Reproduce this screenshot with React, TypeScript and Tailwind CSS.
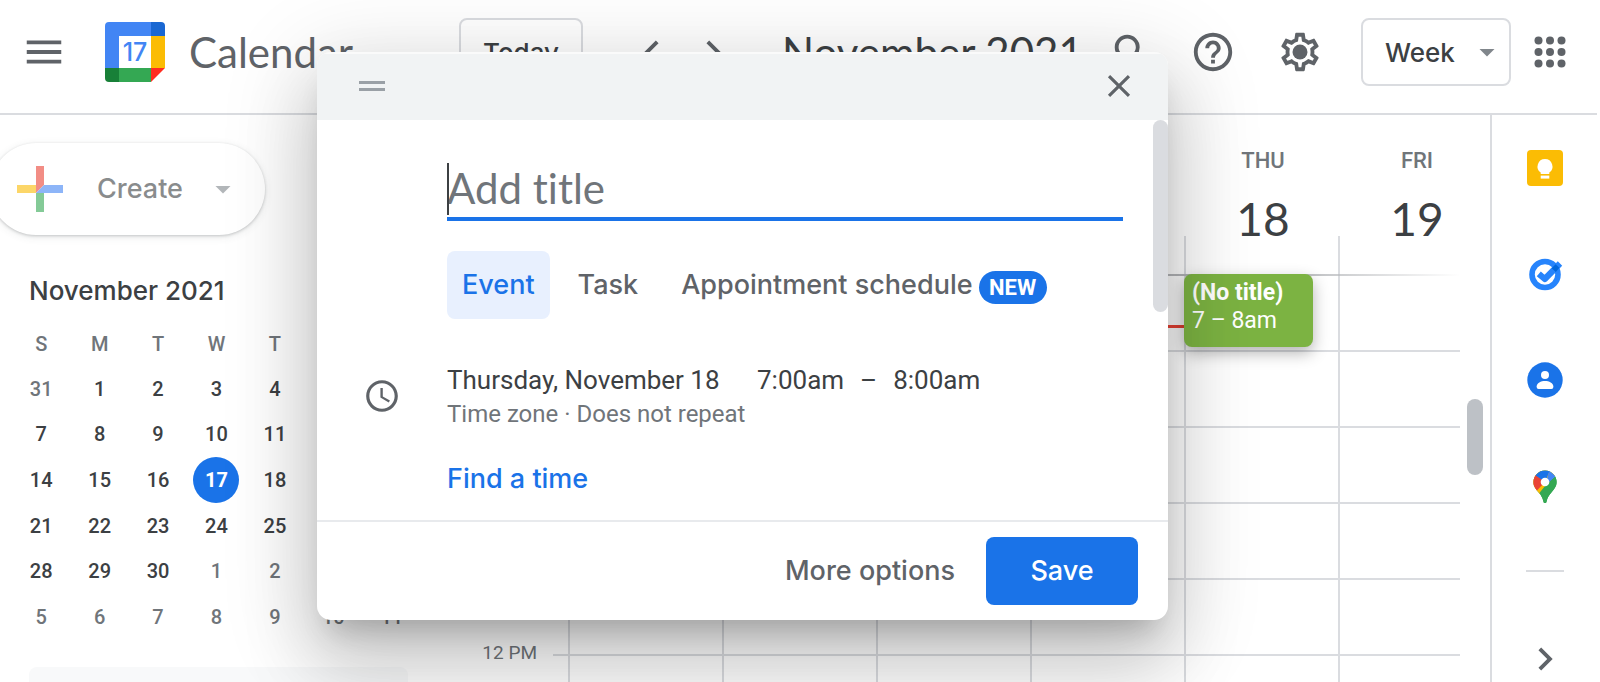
import React from 'react';
import {
  MdAccessTime,
  MdArrowDropDown,
  MdChevronLeft,
  MdChevronRight,
  MdClose,
  MdHelpOutline,
  MdMenu,
  MdSearch,
} from 'react-icons/md';

const WEEKDAYS = ['S', 'M', 'T', 'W', 'T', 'F', 'S'];
const MONTH = [
  [31, 1, 2, 3, 4, 5, 6],
  [7, 8, 9, 10, 11, 12, 13],
  [14, 15, 16, 17, 18, 19, 20],
  [21, 22, 23, 24, 25, 26, 27],
  [28, 29, 30, 1, 2, 3, 4],
  [5, 6, 7, 8, 9, 10, 11],
];
const DAYS = [
  { name: 'SUN', date: 14 },
  { name: 'MON', date: 15 },
  { name: 'TUE', date: 16 },
  { name: 'WED', date: 17 },
  { name: 'THU', date: 18 },
  { name: 'FRI', date: 19 },
];
const HOURS = ['', '', '', '', '', '12 PM'];

function CalendarLogo() {
  return (
    <svg viewBox="0 0 60 60" className="size-[60px] shrink-0" aria-hidden="true">
      <path d="M4 0H46V14H14V46H0V4A4 4 0 0 1 4 0Z" fill="#4285f4" />
      <path d="M46 0H56A4 4 0 0 1 60 4V14H46Z" fill="#1967d2" />
      <path d="M46 14H60V46H46Z" fill="#fbbc04" />
      <path d="M14 46H46V60H14Z" fill="#34a853" />
      <path d="M0 46H14V60H4A4 4 0 0 1 0 56Z" fill="#188038" />
      <path d="M46 46H60L46 60Z" fill="#ff2d20" />
      <path d="M14 14H46V46H14Z" fill="#fff" />
      <text x="30" y="39" textAnchor="middle" fontSize="25" fontWeight="500" fontFamily="Inter, sans-serif" fill="#4285f4">
        17
      </text>
    </svg>
  );
}

function GearIcon() {
  return (
    <svg viewBox="0 0 24 24" className="size-[46px]" fill="currentColor" aria-hidden="true">
      <path d="M19.43 12.98c.04-.32.07-.64.07-.98 0-.34-.03-.66-.07-.98l2.11-1.65c.19-.15.24-.42.12-.64l-2-3.46a.5.5 0 0 0-.61-.22l-2.49 1c-.52-.4-1.08-.73-1.69-.98l-.38-2.65A.488.488 0 0 0 14 2h-4c-.25 0-.46.18-.49.42l-.38 2.65c-.61.25-1.17.59-1.69.98l-2.49-1a.566.566 0 0 0-.18-.03c-.17 0-.34.09-.43.25l-2 3.46c-.13.22-.07.49.12.64l2.11 1.65c-.04.32-.07.65-.07.98 0 .33.03.66.07.98l-2.11 1.65c-.19.15-.24.42-.12.64l2 3.46a.5.5 0 0 0 .61.22l2.49-1c.52.4 1.08.73 1.69.98l.38 2.65c.03.24.24.42.49.42h4c.25 0 .46-.18.49-.42l.38-2.65c.61-.25 1.17-.59 1.69-.98l2.49 1c.06.02.12.03.18.03.17 0 .34-.09.43-.25l2-3.46c.12-.22.07-.49-.12-.64l-2.11-1.65zm-1.98-1.71c.04.31.05.52.05.73 0 .21-.02.43-.05.73l-.14 1.13.89.7 1.08.84-.7 1.21-1.27-.51-1.04-.42-.9.68c-.43.32-.84.56-1.25.73l-1.06.43-.16 1.13-.2 1.35h-1.4l-.19-1.35-.16-1.13-1.06-.43c-.43-.18-.83-.41-1.23-.71l-.91-.7-1.06.43-1.27.51-.7-1.21 1.08-.84.89-.7-.14-1.13c-.03-.31-.05-.54-.05-.74s.02-.43.05-.73l.14-1.13-.89-.7-1.08-.84.7-1.21 1.27.51 1.04.42.9-.68c.43-.32.84-.56 1.25-.73l1.06-.43.16-1.13.2-1.35h1.39l.19 1.35.16 1.13 1.06.43c.43.18.83.41 1.23.71l.91.7 1.06-.43 1.27-.51.7 1.21-1.07.85-.89.7.14 1.13z" />
      <circle cx="12" cy="12" r="3.9" />
    </svg>
  );
}

function AppsIcon() {
  const steps = [11.5, 23, 34.5];
  return (
    <svg viewBox="0 0 46 46" className="size-[46px]" fill="currentColor" aria-hidden="true">
      {steps.map((y) => steps.map((x) => <circle key={`${x}-${y}`} cx={x} cy={y} r="4" />))}
    </svg>
  );
}

function PlusIcon() {
  return (
    <svg viewBox="0 0 46 46" className="size-[46px] shrink-0" aria-hidden="true">
      <path d="M19 0H27V19L19 27Z" fill="#ea4335" />
      <path d="M0 19H19V27H0Z" fill="#fbbc04" />
      <path d="M19 27H27V46H19Z" fill="#34a853" />
      <path d="M27 19H46V27H19Z" fill="#4285f4" />
    </svg>
  );
}

function KeepIcon() {
  return (
    <svg viewBox="0 0 36 36" className="size-[36px]" aria-hidden="true">
      <rect width="36" height="36" rx="4" fill="#fbbc04" />
      <path d="M18 9a7.5 7.5 0 0 0-4.3 13.6V24h8.6v-1.4A7.5 7.5 0 0 0 18 9Z" fill="#fff" />
      <rect x="13.7" y="25.6" width="8.6" height="3" fill="#fff" />
    </svg>
  );
}

function TasksIcon() {
  return (
    <svg viewBox="0 0 36 36" className="size-[36px]" aria-hidden="true">
      <circle cx="18" cy="18.5" r="13" fill="none" stroke="#2684fc" strokeWidth="5.6" />
      <path d="M11.8 17.8L17.8 23L33 7.5" fill="none" stroke="#2684fc" strokeWidth="6.2" strokeLinejoin="round" />
      <path d="M24.6 12.2L28.6 8.2L32.4 11.8L28.8 16Z" fill="#0066da" />
    </svg>
  );
}

function ContactsIcon() {
  return (
    <svg viewBox="0 0 36 36" className="size-[36px]" aria-hidden="true">
      <circle cx="18" cy="18" r="17.7" fill="#1a73e8" />
      <circle cx="18" cy="13" r="4" fill="#fff" />
      <path d="M9.6 24.8C9.6 20.8 14 19 18 19S26.4 20.8 26.4 24.8Q26.4 27 24.4 27H11.6Q9.6 27 9.6 24.8Z" fill="#fff" />
    </svg>
  );
}

function MapsIcon() {
  return (
    <svg viewBox="0 0 36 36" className="size-[36px]" aria-hidden="true">
      <clipPath id="pin">
        <path d="M18 2.5A11.6 11.6 0 0 0 6.4 14.1C6.4 18.7 9 21.4 11.8 24.8C14.2 27.7 15.6 30 16.3 33C16.7 34.7 17 35 18 35S19.3 34.7 19.7 33C20.4 30 21.8 27.7 24.2 24.8C27 21.4 29.6 18.7 29.6 14.1A11.6 11.6 0 0 0 18 2.5Z" />
      </clipPath>
      <g clipPath="url(#pin)">
        <rect width="36" height="36" fill="#34a853" />
        <path d="M0 0H36V7L27 8.5L12 27L0 22Z" fill="#fbbc04" />
        <path d="M0 4L8 5.5L18 14L9.5 23L0 20Z" fill="#ea4335" />
        <path d="M8 7L12 0H24L18 14Z" fill="#1a73e8" />
        <path d="M22.4 2L36 0V7L28 9L18 18Z" fill="#4285f4" />
        <path d="M28.5 8.5L36 6V36H14V27L12.4 25L18 18Z" fill="#34a853" />
      </g>
      <circle cx="18" cy="14" r="4.3" fill="#fff" />
    </svg>
  );
}

function Header() {
  return (
    <header className="mr-[3px] flex h-[115px] shrink-0 items-center border-b-2 border-[#dadce0] pr-6 pb-[9px] pl-[21px] text-[#5f6368]">
      <button type="button" aria-label="Main menu">
        <MdMenu className="size-[46px]" />
      </button>
      <div className="ml-[38px] flex w-[354px] shrink-0 items-center gap-6">
        <CalendarLogo />
        <span className="text-[42px] leading-[52px]">Calendar</span>
      </div>
      <button
        type="button"
        className="h-[68px] w-[124px] shrink-0 rounded-lg border-2 border-[#dadce0] font-[Inter,sans-serif] text-[26px] font-medium text-[#3c4043]"
      >
        Today
      </button>
      <button type="button" aria-label="Previous week" className="ml-[46px]">
        <MdChevronLeft className="size-[46px]" />
      </button>
      <button type="button" aria-label="Next week" className="ml-[15px]">
        <MdChevronRight className="size-[46px]" />
      </button>
      <h1 className="ml-[46px] text-[42px] leading-[52px] whitespace-nowrap text-[#3c4043]">November 2021</h1>
      <button type="button" aria-label="Search" className="ml-auto">
        <MdSearch className="size-[46px]" />
      </button>
      <button type="button" aria-label="Support" className="ml-[35px]">
        <MdHelpOutline className="size-[46px]" />
      </button>
      <button type="button" aria-label="Settings" className="ml-[41px]">
        <GearIcon />
      </button>
      <div className="relative ml-[38px] shrink-0">
        <select
          aria-label="View"
          className="h-[68px] w-[150px] appearance-none rounded-lg border-2 border-[#dadce0] bg-transparent pl-[22px] font-[Inter,sans-serif] text-[26px] font-medium text-[#3c4043]"
          defaultValue="Week"
        >
          <option>Week</option>
        </select>
        <MdArrowDropDown className="pointer-events-none absolute top-[16px] right-[6px] size-[36px] text-[#80868b]" />
      </div>
      <button type="button" aria-label="Google apps" className="ml-4">
        <AppsIcon />
      </button>
    </header>
  );
}

function MiniCalendar() {
  return (
    <table className="mt-3 ml-3 h-[319px] w-[409px] table-fixed text-center font-[Roboto,sans-serif] text-[20px] leading-6 font-medium text-[#3c4043]">
      <thead>
        <tr className="h-[45px]">
          {WEEKDAYS.map((d, i) => (
            <th key={i} scope="col" className="p-0 font-medium text-[#70757a]">
              {d}
            </th>
          ))}
        </tr>
      </thead>
      <tbody>
        {MONTH.map((week, r) => (
          <tr key={r} className="h-[45px]">
            {week.map((d, c) => {
              const outside = (r === 0 && d > 7) || (r > 3 && d < 15);
              const today = r === 2 && d === 17;
              return (
                <td key={c} className={outside ? 'p-0 text-[#70757a]' : 'p-0'}>
                  {today ? (
                    <span className="mx-auto -my-3 flex size-[46px] items-center justify-center rounded-full bg-[#1a73e8] font-bold text-white">
                      {d}
                    </span>
                  ) : (
                    d
                  )}
                </td>
              );
            })}
          </tr>
        ))}
      </tbody>
    </table>
  );
}

function Sidebar() {
  return (
    <aside className="w-[420px] shrink-0">
      <button
        type="button"
        className="mt-7 -ml-[10px] flex h-[92px] w-[275px] items-center rounded-full bg-white pl-[27px] shadow-[0_1px_3px_rgba(60,64,67,0.25),0_2px_8px_rgba(60,64,67,0.1)]"
      >
        <span className="flex items-center opacity-60">
          <PlusIcon />
          <span className="ml-[34px] font-[Inter,sans-serif] text-[27px] font-medium text-[#3c4043]">Create</span>
          <MdArrowDropDown className="ml-[22px] size-[36px] text-[#80868b]" />
        </span>
      </button>
      <h2 className="mt-[38px] ml-[29px] font-[Inter,sans-serif] text-[26px] leading-9 font-medium text-[#3c4043]">
        November 2021
      </h2>
      <MiniCalendar />
      <div className="mt-[27px] mr-3 ml-[29px] h-[76px] rounded-lg bg-[#f8f9fa]" />
    </aside>
  );
}

function WeekGrid() {
  return (
    <main className="flex min-w-0 flex-1">
      <div className="min-w-0 flex-1 overflow-hidden">
        <div className="flex h-[161px]">
          <div className="w-[148px] shrink-0" />
          <div className="relative flex">
            {DAYS.map((d) => (
              <div key={d.name} className="flex w-[154px] shrink-0 flex-col pt-[30px] text-center">
                <span className="pl-1 font-[Roboto,sans-serif] text-[22px] leading-8 font-medium text-[#70757a]">{d.name}</span>
                <span className="mt-[14px] pl-1 text-[46px] leading-[56px] text-[#3c4043]">{d.date}</span>
                <span className="-mt-[11px] h-10 border-l-2 border-[#dadce0]" />
              </div>
            ))}
            <div className="absolute bottom-0 left-0 h-[2px] w-[892px] bg-linear-to-r from-[#b5b7ba] from-80% to-transparent" />
          </div>
        </div>
        {HOURS.map((h, r) => (
          <div key={r} className="flex h-[76px]">
            <div className="w-[133px] shrink-0 pr-4 text-right font-[Roboto,sans-serif] text-[19px] leading-6 text-[#70757a]">
              <div className="-mt-[15px]">{h}</div>
            </div>
            <div className="w-[15px] shrink-0 border-b-2 border-[#dadce0]" />
            {DAYS.map((d) => (
              <div key={d.name} className="relative w-[154px] shrink-0 border-b-2 border-l-2 border-[#dadce0]">
                {r === 0 && d.name === 'WED' && <div className="absolute top-[49px] h-[3px] w-[154px] bg-[#ea4335]" />}
                {r === 0 && d.name === 'THU' && (
                  <div className="absolute -top-[2px] -left-[2px] z-10 h-[73px] w-[129px] rounded-lg bg-[#7cb342] pt-[5px] pl-2 font-[Roboto,sans-serif] text-[23px] leading-7 text-white shadow-[0_6px_16px_rgba(0,0,0,0.3)]">
                    <div className="font-bold">(No title)</div>
                    <div>7 – 8am</div>
                  </div>
                )}
              </div>
            ))}
          </div>
        ))}
      </div>
      <div className="w-[30px] shrink-0 pt-[284px] pl-[7px]">
        <div className="h-[76px] w-4 rounded-full bg-[#bdc1c6]" />
      </div>
    </main>
  );
}

function SideRail() {
  return (
    <nav aria-label="Side panel" className="flex w-[110px] shrink-0 flex-col items-center border-l-2 border-[#dadce0] pt-[35px] pr-[2px]">
      <div className="flex flex-col gap-[70px]">
        <button type="button" aria-label="Keep">
          <KeepIcon />
        </button>
        <button type="button" aria-label="Tasks">
          <TasksIcon />
        </button>
        <button type="button" aria-label="Contacts">
          <ContactsIcon />
        </button>
        <button type="button" aria-label="Maps">
          <MapsIcon />
        </button>
      </div>
      <div className="mt-[66px] h-[2px] w-[38px] shrink-0 bg-[#dadce0]" />
      <button type="button" aria-label="Hide side panel" className="mt-16 text-[#5f6368]">
        <MdChevronRight className="size-[46px]" />
      </button>
    </nav>
  );
}

function EventDialog() {
  return (
    <section
      role="dialog"
      aria-label="New event"
      className="absolute top-[52px] left-[317px] z-20 w-[851px] overflow-hidden rounded-[14px] bg-white shadow-[0_46px_72px_6px_rgba(0,0,0,0.14),0_17px_87px_15px_rgba(0,0,0,0.12),0_21px_29px_-13px_rgba(0,0,0,0.2)]"
    >
      <div className="flex h-[68px] items-center justify-between border-t-2 border-[#fafafa] bg-[#f1f3f4] pr-[30px] pb-[2px] pl-[42px]">
        <div className="flex h-[10px] w-[26px] flex-col justify-between">
          <div className="h-[3px] bg-[#9aa0a6]" />
          <div className="h-[3px] bg-[#9aa0a6]" />
        </div>
        <button type="button" aria-label="Close" className="text-[#5f6368]">
          <MdClose className="size-[38px]" />
        </button>
      </div>

      <div className="relative pb-[23px]">
        <div className="absolute top-0 right-0 h-[192px] w-[15px] rounded-full bg-[#dadce0]" />
        <div className="mr-[45px] ml-[130px] pt-[43px]">
          <div className="relative">
            <input
              aria-label="Add title"
              placeholder="Add title"
              className="block h-[58px] w-full border-b-4 border-[#1a73e8] pb-1 text-[42px] text-[#3c4043] outline-none placeholder:text-[#70757a]"
            />
            <span className="absolute top-0 left-0 h-[52px] w-[2px] bg-[#3c4043]" />
          </div>
          <div role="tablist" className="mt-[30px] flex h-[68px] gap-4 font-[Inter,sans-serif] text-[27px] font-medium text-[#5f6368]">
            <button type="button" role="tab" aria-selected="true" className="rounded-lg bg-[#e8f0fe] px-[15px] text-[#1a73e8]">
              Event
            </button>
            <button type="button" role="tab" aria-selected="false" className="px-3">
              Task
            </button>
            <button type="button" role="tab" aria-selected="false" className="flex items-center gap-[6px] pl-[15px] whitespace-nowrap">
              Appointment schedule
              <span className="mt-1 flex h-[33px] w-[68px] items-center justify-center rounded-full bg-[#1a73e8] font-[Roboto,sans-serif] text-[22px] font-bold text-white">
                NEW
              </span>
            </button>
          </div>
        </div>
        <div className="mt-[44px] flex items-center font-[Roboto,sans-serif]">
          <div className="w-[130px] shrink-0 pb-[3px] pl-[46px] text-[#5f6368]">
            <MdAccessTime className="size-[38px]" />
          </div>
          <div>
            <div className="flex text-[26px] leading-[34px] text-[#3c4043]">
              <button type="button" className="w-[278px] text-left">
                Thursday, November 18
              </button>
              <button type="button" className="ml-8">
                7:00am
              </button>
              <span className="mx-4">–</span>
              <button type="button">8:00am</button>
            </div>
            <div className="text-[24px] leading-[34px] text-[#70757a]">
              <button type="button">Time zone</button> · <button type="button">Does not repeat</button>
            </div>
          </div>
        </div>
        <button
          type="button"
          className="mt-[30px] ml-[130px] block font-[Inter,sans-serif] text-[27px] leading-9 font-medium text-[#1a73e8]"
        >
          Find a time
        </button>
      </div>

      <div className="flex h-[100px] items-center justify-end gap-[31px] border-t-2 border-[#e8eaed] pr-[30px] font-[Inter,sans-serif] text-[27px] font-medium">
        <button type="button" className="text-[#5f6368]">
          More options
        </button>
        <button type="button" className="h-[68px] w-[152px] rounded-lg bg-[#1a73e8] text-white">
          Save
        </button>
      </div>
    </section>
  );
}

export default function App() {
  return (
    <div className="relative flex h-screen flex-col overflow-hidden bg-white font-[Lato,sans-serif] [font-variant-ligatures:none]">
      <Header />
      <div className="flex min-h-0 flex-1">
        <Sidebar />
        <WeekGrid />
        <SideRail />
      </div>
      <EventDialog />
    </div>
  );
}
